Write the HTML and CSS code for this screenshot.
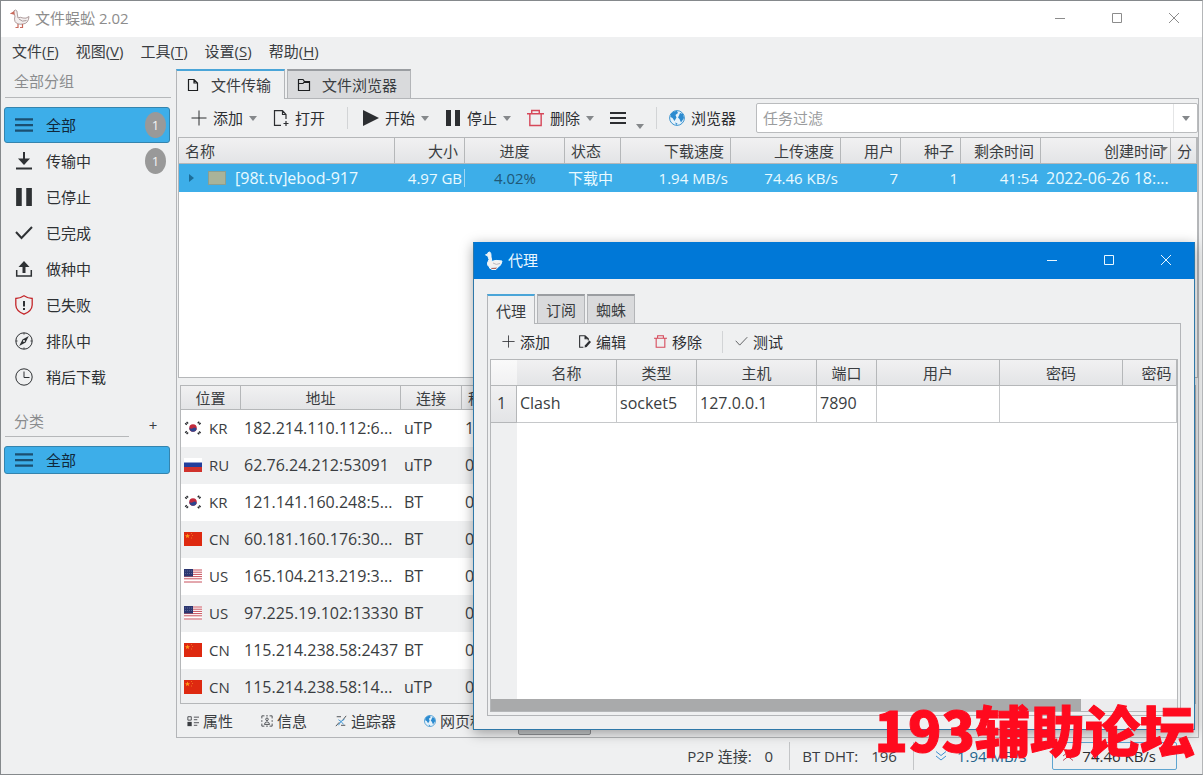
FILE: index.html
```html
<!DOCTYPE html>
<html lang="zh-CN">
<head>
<meta charset="utf-8">
<title>文件蜈蚣 2.02</title>
<link rel="stylesheet" href="styles.css">
</head>
<body>
<svg class="defs" aria-hidden="true">
  <symbol id="goose" viewBox="0 0 20 20"><path d="M3.500 4Q3.500 1 5.500 1Q7.500 1 7.300 5L8 9Q10 7.500 13 9Q16 10 19 7.500Q18.500 14.500 13 15Q7 16 5 12.500Q4 10.500 5 7Z" fill="#f3eeee" stroke="#9c8585" stroke-width=".8"/><path d="M3.800 3L1.500 4.400L4 5ZM8 15V18.500H5.500M12.500 15V18.500H10" fill="none" stroke="#c96a5c" stroke-width="1.200"/><path d="M9 10Q12 13.500 16.500 11.500" fill="none" stroke="#a89a9a"/></symbol>
  <symbol id="goose-white" viewBox="0 0 20 20"><path d="M3.500 4Q3.500 1 5.300 1Q7.200 1 7 6L8 10.500Q11 8.500 18 10Q17 16.500 10.500 17Q3 17 3.500 12L5 8.500Z" fill="#f4f1ee"/><path d="M3.700 3L1.500 3.800L3.700 5ZM5 16.500L8 18.500H12L14 16Z" fill="#b1675c"/><path d="M9 12Q12 14.500 16 12.500" fill="none" stroke="#b8b8c0"/></symbol>
  <symbol id="min" viewBox="0 0 12 12"><path d="M1 6.500H11"/></symbol>
  <symbol id="max" viewBox="0 0 12 12"><path d="M1.500 1.500H10.500V10.500H1.500Z"/></symbol>
  <symbol id="close" viewBox="0 0 12 12"><path d="M1 1L11 11M11 1L1 11"/></symbol>
  <symbol id="lines" viewBox="0 0 16 16"><path d="M0 3H16M0 8H16M0 13H16"/></symbol>
  <symbol id="download" viewBox="0 0 18 18"><path d="M9 0V7M1 16.500H17" stroke-width="2"/><path d="M3 6.500L9 13L15 6.500Z" fill="currentColor" stroke="none"/></symbol>
  <symbol id="pause" viewBox="0 0 16 16"><path d="M1 0H6V16H1ZM10 0H15V16H10Z" fill="currentColor" stroke="none"/></symbol>
  <symbol id="check" viewBox="0 0 18 18"><path d="M1 8L6.500 14L17 3"/></symbol>
  <symbol id="upload" viewBox="0 0 18 18"><path d="M1.700 10V16H16.300V10" stroke-width="1.500"/><path d="M9 13V5" stroke-width="3"/><path d="M3.500 7L9 1L14.500 7Z" fill="currentColor" stroke="none"/></symbol>
  <symbol id="shield" viewBox="0 0 18 20"><path d="M9 .8Q13 3.500 17.200 3.500V10Q17 16 9 19.200Q1 16 .8 10V3.500Q5 3.500 9 .8Z" stroke="#c4272b" stroke-width="1.300"/><path d="M9 6V11.500M9 13V15" stroke-width="2"/></symbol>
  <symbol id="compass" viewBox="0 0 18 18"><circle cx="9" cy="9" r="8.200"/><path d="M13.800 4L10.600 10.600L4.200 14L7.500 7.400Z" fill="currentColor" stroke="none"/><path d="M9 1V2.500M9 15.500V17M1 9H2.500M15.500 9H17"/><circle cx="9" cy="9" r="1" fill="#eff0f1" stroke="none"/></symbol>
  <symbol id="clock" viewBox="0 0 18 18"><circle cx="9" cy="9" r="8.200"/><path d="M9 3.500V9.500H14.500"/></symbol>
  <symbol id="doc" viewBox="0 0 14 14"><path d="M2.500 1.500H8L11.500 5V12.500H2.500ZM8 1.500V5H11.500" stroke-width="1.200"/></symbol>
  <symbol id="folder" viewBox="0 0 14 14"><path d="M1.500 1.500H6L7.500 3.500H12.500V12.500H1.500ZM1.500 5.500H6L7.500 3.500" stroke-width="1.200"/><path d="M7 3H13V5H7Z" fill="currentColor" stroke="none"/></symbol>
  <symbol id="plus" viewBox="0 0 16 16"><path d="M8 .5V15.500M.5 8H15.500"/></symbol>
  <symbol id="docplus" viewBox="0 0 16 16"><path d="M8 15.300H1.500V.7H9.500L13 4.500V9M9.500 .7V4.500H13M13 11V16M10.500 13.500H15.500" stroke-width="1.200"/></symbol>
  <symbol id="docedit" viewBox="0 0 12 12"><path d="M5 11.300H1.500V.7H6.500L9.500 3.500V5M6.500 .7V3.500H9.500"/><path d="M6 11.500L6.500 9.500L10.500 5L12 6.500L8 11Z" fill="currentColor" stroke="none"/></symbol>
  <symbol id="play" viewBox="0 0 16 16"><path d="M0 0L16 8L0 16Z" fill="currentColor" stroke="none"/></symbol>
  <symbol id="trash" viewBox="0 0 18 18"><path d="M0 4.500H18M5 4V1H13V4M3 4.500V17H15V4.500"/></symbol>
  <symbol id="globe" viewBox="0 0 16 16"><circle cx="8" cy="8" r="7.400" fill="#e6f2fa" stroke="#3a93cf"/><path d="M2 3.500Q5 .5 8 1L9 3L6.500 5L7.500 7.500L5.500 11L3.500 8L1.500 7ZM11 3L14 4L15 8L12 12.500L10.500 9L9 7.500L10 5.500ZM6 12.500L8.500 13.500L7.500 15Z" fill="#2c8bd0" stroke="none"/></symbol>
  <symbol id="props" viewBox="0 0 14 12"><path d="M1 1H5V5H1ZM8 1.500H14M8 4.500H12M8 8H14M8 11H12"/><path d="M.5 7H5.500V12H.5Z" fill="currentColor" stroke="none"/></symbol>
  <symbol id="info" viewBox="0 0 14 14"><path d="M1 4V1H4M6 1H8M10 1H13V4M13 6V8M13 10V13H10M8 13H6M4 13H1V10M1 8V6"/><circle cx="7" cy="5" r="1.500"/><path d="M4 11Q4.500 8 7 8Q9.500 8 10 11Z"/></symbol>
  <symbol id="tracker" viewBox="0 0 14 14"><path d="M2 2H7M1 13L5 8.500M9 6L13 1M7 12H12"/><path d="M4 5.500L7 7.500L11 5M7 7.500L4 12M7 7.500L10 11" stroke="#2c8bd0"/></symbol>
  <symbol id="down2" viewBox="0 0 12 12"><path d="M1 1.500L6 5.500L11 1.500M1 6L6 10L11 6"/></symbol>
  <symbol id="kr" viewBox="0 0 18 14"><path d="M0 0H18V14H0Z" fill="#fff"/><circle cx="9" cy="7" r="3.800" fill="#c22a3c"/><path d="M5.300 6.500Q7 8.800 9 7Q11 5.500 12.700 7.800Q12 10.800 9 10.800Q5.500 10.500 5.300 6.500Z" fill="#2d4690"/><path d="M1.500 3.500L4 1M14 1L16.500 3.500M1.500 10.500L4 13M14 13L16.500 10.500" stroke="#26282c" stroke-width="2.200" stroke-dasharray="1.400 .5"/></symbol>
  <symbol id="ru" viewBox="0 0 18 14"><path d="M0 0H18V5H0Z" fill="#fff"/><path d="M0 4.500H18V9H0Z" fill="#233f9c"/><path d="M0 9H18V14H0Z" fill="#d0322c"/></symbol>
  <symbol id="cn" viewBox="0 0 18 14"><path d="M0 0H18V14H0Z" fill="#de2910"/><path d="M3.500 1.500L4.200 3.300H6L4.600 4.400L5.100 6.200L3.500 5.100L1.900 6.200L2.400 4.400L1 3.300H2.800Z" fill="#ff9a1a"/><path d="M7 1.500H8M8 3.500H9M7 6H8" stroke="#f0701a"/></symbol>
  <symbol id="us" viewBox="0 0 18 14"><path d="M0 0H18V14H0Z" fill="#fff"/><path d="M0 1H18M0 3.200H18M0 5.400H18M0 7.600H18M0 9.800H18M0 13H18" stroke="#c8505c"/><path d="M0 0H9V7.500H0Z" fill="#2b3670"/><path d="M1 2H8M1 4.500H8" stroke="#6f78a4" stroke-width=".7" stroke-dasharray="1 1"/></symbol>
</svg>

<div class="app">
  <header class="titlebar">
    <svg class="goose"><use href="#goose"/></svg>
    <h1 class="title">文件蜈蚣 2.02</h1>
    <button class="winbtn" aria-label="最小化"><svg><use href="#min"/></svg></button>
    <button class="winbtn" aria-label="最大化"><svg><use href="#max"/></svg></button>
    <button class="winbtn" aria-label="关闭"><svg><use href="#close"/></svg></button>
  </header>
  <nav class="menubar">
    <button>文件(<u>F</u>)</button><button>视图(<u>V</u>)</button><button>工具(<u>T</u>)</button><button>设置(<u>S</u>)</button><button>帮助(<u>H</u>)</button>
  </nav>

  <div class="body">
    <aside class="sidebar">
      <h2 class="side-head">全部分组</h2>
      <div class="side-list">
        <button class="side-item active"><svg class="bars"><use href="#lines"/></svg><span>全部</span><i class="badge">1</i></button>
        <button class="side-item"><svg><use href="#download"/></svg><span>传输中</span><i class="badge">1</i></button>
        <button class="side-item"><svg><use href="#pause"/></svg><span>已停止</span></button>
        <button class="side-item"><svg class="bold"><use href="#check"/></svg><span>已完成</span></button>
        <button class="side-item"><svg><use href="#upload"/></svg><span>做种中</span></button>
        <button class="side-item"><svg class="tall"><use href="#shield"/></svg><span>已失败</span></button>
        <button class="side-item"><svg><use href="#compass"/></svg><span>排队中</span></button>
        <button class="side-item"><svg><use href="#clock"/></svg><span>稍后下载</span></button>
      </div>
      <div class="cat-row"><h2 class="side-head cat">分类</h2><button class="cat-add" aria-label="添加分类">+</button></div>
      <div class="side-list"><button class="side-item active short"><svg class="bars"><use href="#lines"/></svg><span>全部</span></button></div>
    </aside>

    <main class="main">
      <div class="tabs">
        <button class="tab on"><svg><use href="#doc"/></svg>文件传输</button>
        <button class="tab"><svg><use href="#folder"/></svg>文件浏览器</button>
      </div>
      <div class="panel">
        <div class="toolbar">
          <button class="tool"><svg><use href="#plus"/></svg>添加<i class="caret"></i></button>
          <button class="tool"><svg><use href="#docplus"/></svg>打开</button>
          <span class="sep wide"></span>
          <button class="tool"><svg><use href="#play"/></svg>开始<i class="caret"></i></button>
          <button class="tool"><svg><use href="#pause"/></svg>停止<i class="caret"></i></button>
          <button class="tool"><svg class="red"><use href="#trash"/></svg>删除<i class="caret"></i></button>
          <button class="tool more" aria-label="更多"><svg class="bars"><use href="#lines"/></svg><i class="caret"></i></button>
          <span class="sep"></span>
          <button class="tool"><svg><use href="#globe"/></svg>浏览器</button>
          <div class="filter"><input type="text" placeholder="任务过滤" aria-label="任务过滤"><button aria-label="展开"><i class="caret"></i></button></div>
        </div>

        <div class="tasks">
          <table class="grid">
            <colgroup><col class="w216"><col class="w70"><col class="w100"><col class="w56"><col class="w110"><col class="w110"><col class="w60"><col class="w60"><col class="w80"><col class="w130"><col></colgroup>
            <thead><tr><th class="l">名称</th><th class="r">大小</th><th>进度</th><th class="l">状态</th><th class="r">下载速度</th><th class="r">上传速度</th><th class="r">用户</th><th class="r">种子</th><th class="r">剩余时间</th><th class="r sorted">创建时间</th><th class="l">分</th></tr></thead>
            <tbody><tr><td class="wide-text"><div class="name"><i class="expand"></i><i class="dir"></i>[98t.tv]ebod-917</div></td><td class="r size">4.97 GB</td><td class="c pct">4.02%</td><td>下载中</td><td class="r">1.94 MB/s</td><td class="r">74.46 KB/s</td><td class="r">7</td><td class="r">1</td><td class="r">41:54</td><td class="wide-text">2022-06-26 18:...</td><td></td></tr></tbody>
          </table>
        </div>

        <div class="peers">
          <table class="grid">
            <colgroup><col class="w60"><col class="w160"><col class="w61"><col class="w80"><col></colgroup>
            <thead><tr><th>位置</th><th>地址</th><th>连接</th><th class="l">种子</th><th></th></tr></thead>
            <tbody>
              <tr><td><div class="place"><svg><use href="#kr"/></svg>KR</div></td><td>182.214.110.112:6...</td><td>uTP</td><td>1</td><td></td></tr>
              <tr><td><div class="place"><svg><use href="#ru"/></svg>RU</div></td><td>62.76.24.212:53091</td><td>uTP</td><td>0</td><td></td></tr>
              <tr><td><div class="place"><svg><use href="#kr"/></svg>KR</div></td><td>121.141.160.248:5...</td><td>BT</td><td>0</td><td></td></tr>
              <tr><td><div class="place"><svg><use href="#cn"/></svg>CN</div></td><td>60.181.160.176:30...</td><td>BT</td><td>0</td><td></td></tr>
              <tr><td><div class="place"><svg><use href="#us"/></svg>US</div></td><td>165.104.213.219:3...</td><td>BT</td><td>0</td><td></td></tr>
              <tr><td><div class="place"><svg><use href="#us"/></svg>US</div></td><td>97.225.19.102:13330</td><td>BT</td><td>0</td><td></td></tr>
              <tr><td><div class="place"><svg><use href="#cn"/></svg>CN</div></td><td>115.214.238.58:2437</td><td>BT</td><td>0</td><td></td></tr>
              <tr><td><div class="place"><svg><use href="#cn"/></svg>CN</div></td><td>115.214.238.58:14...</td><td>uTP</td><td>0</td><td></td></tr>
            </tbody>
          </table>
        </div>
        <div class="subtabs">
          <button><svg><use href="#props"/></svg>属性</button>
          <button><svg><use href="#info"/></svg>信息</button>
          <button><svg><use href="#tracker"/></svg>追踪器</button>
          <button><svg><use href="#globe"/></svg>网页种</button>
          <span class="subtab-on"></span>
        </div>
      </div>
    </main>
  </div>

  <footer class="status">
    <span class="stat">P2P 连接:<b>0</b></span>
    <span class="stat">BT DHT:<b>196</b></span>
    <span class="rate"><svg><use href="#down2"/></svg>1.94 MB/s</span>
    <button class="rate boxed"><svg class="flip"><use href="#down2"/></svg>74.46 KB/s</button>
  </footer>

  <section class="dialog" role="dialog" aria-label="代理">
    <header class="dlg-title">
      <svg class="goose"><use href="#goose-white"/></svg>
      <h2 class="title">代理</h2>
      <button class="winbtn" aria-label="最小化"><svg><use href="#min"/></svg></button>
      <button class="winbtn" aria-label="最大化"><svg><use href="#max"/></svg></button>
      <button class="winbtn" aria-label="关闭"><svg><use href="#close"/></svg></button>
    </header>
    <div class="dlg-body">
      <div class="tabs">
        <button class="tab on">代理</button><button class="tab">订阅</button><button class="tab">蜘蛛</button>
      </div>
      <div class="panel">
        <div class="toolbar small">
          <button class="tool"><svg><use href="#plus"/></svg>添加</button>
          <button class="tool"><svg><use href="#docedit"/></svg>编辑</button>
          <button class="tool last"><svg class="red"><use href="#trash"/></svg>移除</button>
          <span class="sep"></span>
          <button class="tool"><svg><use href="#check"/></svg>测试</button>
        </div>
        <div class="proxies">
          <table class="grid">
            <colgroup><col class="w26"><col class="w100"><col class="w80"><col class="w120"><col class="w60"><col class="w123"><col class="w123"><col></colgroup>
            <thead><tr><th class="corner"></th><th>名称</th><th>类型</th><th>主机</th><th>端口</th><th>用户</th><th>密码</th><th class="cut">密码</th></tr></thead>
            <tbody><tr><th class="rownum" scope="row">1</th><td>Clash</td><td>socket5</td><td>127.0.0.1</td><td>7890</td><td></td><td class="open"></td><td></td></tr></tbody>
          </table>
          <div class="empty"></div>
          <div class="scroll"><div class="thumb"></div></div>
        </div>
      </div>
    </div>
  </section>
  <div class="mark">193辅助论坛</div>
</div>
</body>
</html>
```
FILE: styles.css
```css
* { box-sizing: border-box; }
body {
  margin: 0;
  font: 15px/20px "Open Sans", "Noto Sans CJK SC", sans-serif;
  color: #3a3d41;
  background: #eff0f1;
}
button, input { font: inherit; color: inherit; }
button { background: none; border: 0; padding: 0; white-space: nowrap; }
h1, h2 { margin: 0; font-size: 15px; font-weight: 400; }
i, b { font-style: normal; font-weight: 400; }
svg { flex: none; width: 16px; height: 16px; fill: none; stroke: currentColor; }
.defs { position: absolute; width: 0; height: 0; }

.app {
  position: relative;
  display: flex;
  flex-direction: column;
  height: 100vh;
  overflow: hidden;
  border: 1px solid #85898c;
  border-right-color: #b4b6b8;
  background: #eff0f1;
}

/* window frames */
.titlebar, .dlg-title { display: flex; align-items: center; height: 36px; flex: none; }
.titlebar { background: #fff; color: #8c8c8c; padding-left: 9px; }
.goose { width: 20px; height: 20px; }
.title { flex: 1; margin-left: 4px; padding-bottom: 2px; }
.titlebar .title { margin-left: 5px; }
.winbtn { width: 57px; height: 36px; padding-bottom: 2px; }
.winbtn svg { width: 12px; height: 12px; display: block; margin: 0 auto; }

.menubar { display: flex; gap: 17px; height: 30px; flex: none; padding: 0 0 2px 11px; }
.menubar u { text-underline-offset: 2px; }

.body { display: flex; flex: 1; min-height: 0; }

/* sidebar */
.sidebar { width: 172px; flex: none; padding: 0 2px 0 3px; }
.side-head { height: 31px; padding: 4px 9px 0; line-height: 20px; color: #8a8c8e; border-bottom: 1px solid #b6b8ba; margin: 0 0 9px 1px; }
.side-item {
  display: flex;
  align-items: center;
  width: 166px;
  height: 36px;
  padding: 0 4px 0 11px;
  border-radius: 3px;
  text-align: left;
  color: #2e3134;
}
.side-item span { flex: 1; margin-left: 13px; }
.side-item svg { width: 18px; height: 18px; }
.side-item .tall { height: 20px; }
.side-item .bold { stroke-width: 2; }
.side-item.active { background: #3daee9; border: 1px solid #3484ae; color: #10283a; padding: 0 3px 0 10px; }
.side-item.active svg { color: #1b4f70; }
.side-item.short { height: 28px; }
.bars { stroke-width: 2; }
.badge { width: 21px; height: 26px; border-radius: 50%; background: #999; color: #f4f4f4; line-height: 26px; text-align: center; font-size: 13px; }
.cat-row { display: flex; align-items: flex-end; justify-content: space-between; height: 51px; padding: 0 11px 0 1px; }
.side-head.cat { width: 124px; margin: 0 0 9px; height: 32px; padding-top: 6px; }
.cat-add { width: 14px; height: 20px; margin-bottom: 11px; }

/* tabs and panels */
.main { flex: 1; min-width: 0; display: flex; flex-direction: column; padding: 2px 3px 0 3px; }
.tabs { display: flex; gap: 2px; }
.tab {
  display: flex;
  align-items: center;
  gap: 11px;
  height: 29px;
  padding: 0 13px 0 9px;
  background: #d9dadc;
  border: 1px solid #b3b5b8;
  border-top: 2px solid #9a9da1;
  border-bottom: 0;
}
.tab svg { width: 14px; height: 14px; color: #1c1e20; }
.tab.on { background: #eff0f1; border-top-color: #4aa5d8; height: 30px; margin-bottom: -1px; z-index: 1; }
.panel { flex: 1; min-height: 0; display: flex; flex-direction: column; border: 1px solid #b3b5b8; padding: 0 0 0 1px; }

.toolbar { display: flex; align-items: center; gap: 8px; height: 38px; flex: none; padding-left: 9px; }
.tool { display: flex; align-items: center; gap: 6px; height: 28px; padding: 0 4px; color: #2c2e31; }
.red { stroke: #d6485a; }
.tool .red { width: 17px; height: 18px; stroke-width: 1.5; }
.caret { width: 0; height: 0; border: 4px solid transparent; border-top: 5px solid #85888b; border-bottom: 0; }
.more { gap: 10px; }
.more .caret { align-self: flex-end; margin-bottom: 3px; }
.sep { width: 1px; height: 22px; background: #d2d4d6; }
.sep.wide { margin: 0 3px 0 10px; }
.filter { flex: 1; display: flex; height: 30px; margin-left: 8px; background: #fff; border: 1px solid #babcbe; border-radius: 2px; }
.filter input { flex: 1; min-width: 0; border: 0; padding: 0 6px; background: none; outline: 0; }
.filter input::placeholder { color: #9a9c9e; }
.filter button { width: 24px; display: flex; align-items: center; justify-content: center; border-left: 1px solid #e4e5e6; }

/* tables */
.grid { width: 100%; table-layout: fixed; border-collapse: separate; border-spacing: 0; }
.grid th { height: 26px; padding: 0 6px; font-weight: 400; background: linear-gradient(#f1f1f2, #e3e4e6); border-right: 1px solid #b5b7b9; border-bottom: 1px solid #b5b7b9; white-space: nowrap; }
.grid td { padding: 0 3px; white-space: nowrap; overflow: hidden; }
.grid .l { text-align: left; }
.grid .r { text-align: right; }
.grid .c { text-align: center; }
.w26 { width: 26px; } .w56 { width: 56px; } .w60 { width: 60px; } .w61 { width: 61px; }
.w70 { width: 70px; } .w80 { width: 80px; } .w100 { width: 100px; } .w110 { width: 110px; }
.w120 { width: 120px; } .w123 { width: 123px; } .w130 { width: 130px; } .w160 { width: 160px; } .w216 { width: 216px; }

.tasks { flex: 241 1 0; min-height: 0; overflow: hidden; background: #fff; border: 1px solid #b5b7b9; }
.tasks td { height: 28px; background: #3daee9; color: #e9faff; }
.grid td.wide-text { font-size: 16px; padding-left: 5px; }
.tasks td.pct { color: #1f5877; }
.tasks .size { background: linear-gradient(#9fd6f4, #9fd6f4) right center / 1px 18px no-repeat #3daee9; }
.name { display: flex; align-items: center; }
.expand { border: 4px solid transparent; border-left: 5px solid #1c6d99; border-right: 0; margin: 0 14px 0 5px; }
.dir { width: 18px; height: 14px; margin-right: 9px; background: #a9b399; border: 1px solid #8c9f90; }
.sorted { position: relative; }
.sorted::after { content: ""; position: absolute; right: 2px; top: 9px; border: 4px solid transparent; border-top: 4px solid #6d7073; border-bottom: 0; }

.peers { flex: 319 1 0; min-height: 0; overflow: hidden; margin: 7px 2px 0; background: #fff; border: 1px solid #b5b7b9; }
.peers th { height: 24px; }
.peers td { height: 37px; padding-bottom: 2px; font-size: 16px; }
.peers tr:nth-child(even) td { background: #eff0f1; }
.place { display: flex; align-items: center; gap: 7px; font-size: 15px; }
.place svg { width: 18px; height: 14px; stroke: none; }
.subtabs { display: flex; align-items: center; gap: 28px; height: 33px; padding-left: 9px; flex: none; }
.subtabs button { display: flex; align-items: center; gap: 4px; height: 26px; }
.subtabs svg { width: 12px; height: 12px; }
.subtab-on { width: 73px; height: 31px; align-self: flex-start; margin-left: 5px; border: 1px solid #8f9194; border-radius: 2px; background: #c5c8ca; }

/* status bar */
.status { display: flex; align-items: center; justify-content: flex-end; height: 36px; flex: none; padding: 0 25px 0 0; }
.stat { display: flex; gap: 13px; height: 28px; line-height: 28px; padding: 0 16px 0 12px; border-right: 1px solid #c3c5c7; }
.rate { display: flex; align-items: center; gap: 10px; height: 28px; padding: 0 26px 0 21px; color: #24648c; }
.rate svg { width: 12px; height: 12px; stroke: #3f8fd0; }
.rate.boxed { border: 1px solid #5fa5d0; border-radius: 2px; gap: 8px; padding: 0 20px 0 9px; color: #2c2e31; }
.rate .flip { transform: rotate(180deg); stroke: #b5505c; }

/* proxy dialog floating above the main window */
.dialog {
  position: absolute;
  left: 472px;
  right: 7px;
  top: 241px;
  bottom: 44px;
  display: flex;
  flex-direction: column;
  background: #eff0f1;
  border: 1px solid #2f78a8;
  border-top-color: #0078d7;
  box-shadow: 0 3px 12px rgba(0, 0, 0, .35);
}
.dlg-title { background: #0078d7; color: #e8f7ff; padding-left: 10px; }
.dlg-body { flex: 1; min-height: 0; display: flex; flex-direction: column; padding: 15px 13px 13px; }
.dialog .tab { padding: 1px 8px 0; }
.dialog .panel { padding: 0 2px 3px; }
.toolbar.small { height: 35px; padding-left: 8px; }
.small .tool svg { width: 13px; height: 13px; }
.small .tool { margin-right: 12px; gap: 5px; }
.small .last { margin-right: 8px; }
.proxies { flex: 1; min-height: 0; display: flex; flex-direction: column; border: 1px solid #b5b7b9; background: #fff; }
.proxies td { height: 37px; padding-bottom: 2px; font-size: 16px; border-right: 1px solid #c6c8ca; border-bottom: 1px solid #c6c8ca; }
.proxies td.open { border-right: 0; }
.grid th.corner { background: linear-gradient(#fafafa, #f1f1f2); border-right: 0; }
.grid th.rownum { padding: 0 4px 2px 0; font-size: 16px; }
.grid th.cut { padding: 0 0 0 14px; }
.empty { flex: 1; width: 26px; background: #eff0f1; }
.scroll { height: 12px; background: #ececee; }
.thumb { width: 86%; height: 12px; background: #a9aaab; }

.mark {
  position: absolute;
  right: 7px;
  bottom: 10px;
  font: 900 55px/72px "Noto Sans CJK SC", sans-serif;
  color: #ff0a1e;
  -webkit-text-stroke: 1px #ff0a1e;
  white-space: nowrap;
}
```
